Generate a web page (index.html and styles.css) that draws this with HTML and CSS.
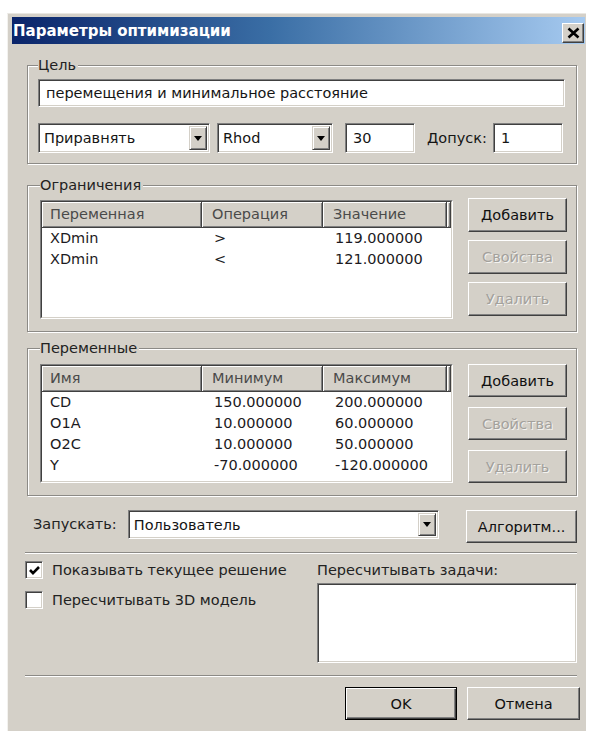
FILE: index.html
```html
<!DOCTYPE html>
<html lang="ru">
<head>
<meta charset="utf-8">
<title>Параметры оптимизации</title>
<link rel="stylesheet" href="styles.css">
</head>
<body>
<div class="window">
  <div class="titlebar">
    <span class="title">Параметры оптимизации</span>
    <span class="close">
      <svg width="13" height="12" viewBox="0 0 13 12"><path d="M1.5 1.5 L11.5 10.5 M11.5 1.5 L1.5 10.5" stroke="#000" stroke-width="2.6" fill="none"/></svg>
    </span>
  </div>

  <div class="content">
    <div class="group group-goal">
      <div class="legend">Цель</div>
      <div class="field field-wide">перемещения и минимальное расстояние</div>
      <div class="goal-row">
        <div class="combo combo-mode">
          <span class="combo-text">Приравнять</span>
          <span class="drop"><i class="arrow"></i></span>
        </div>
        <div class="combo combo-var">
          <span class="combo-text">Rhod</span>
          <span class="drop"><i class="arrow"></i></span>
        </div>
        <div class="field field-num">30</div>
        <span class="tol-label">Допуск:</span>
        <div class="field field-num field-tol">1</div>
      </div>
    </div>

    <div class="group group-limits">
      <div class="legend">Ограничения</div>
      <div class="list-row">
        <div class="listview">
          <div class="lv-inner">
            <div class="lv-head">
              <span class="hd c1">Переменная</span>
              <span class="hd c2">Операция</span>
              <span class="hd c3">Значение</span>
              <span class="hd tail"></span>
            </div>
            <div class="lv-row"><span class="c1">XDmin</span><span class="c2">&gt;</span><span class="c3">119.000000</span></div>
            <div class="lv-row"><span class="c1">XDmin</span><span class="c2">&lt;</span><span class="c3">121.000000</span></div>
          </div>
        </div>
        <div class="btn-col btn-col-limits">
          <div class="btn">Добавить</div>
          <div class="btn disabled">Свойства</div>
          <div class="btn disabled">Удалить</div>
        </div>
      </div>
    </div>

    <div class="group group-vars">
      <div class="legend">Переменные</div>
      <div class="list-row">
        <div class="listview">
          <div class="lv-inner">
            <div class="lv-head">
              <span class="hd c1">Имя</span>
              <span class="hd c2">Минимум</span>
              <span class="hd c3">Максимум</span>
              <span class="hd tail"></span>
            </div>
            <div class="lv-row"><span class="c1">CD</span><span class="c2">150.000000</span><span class="c3">200.000000</span></div>
            <div class="lv-row"><span class="c1">O1A</span><span class="c2">10.000000</span><span class="c3">60.000000</span></div>
            <div class="lv-row"><span class="c1">O2C</span><span class="c2">10.000000</span><span class="c3">50.000000</span></div>
            <div class="lv-row"><span class="c1">Y</span><span class="c2">-70.000000</span><span class="c3">-120.000000</span></div>
          </div>
        </div>
        <div class="btn-col btn-col-vars">
          <div class="btn">Добавить</div>
          <div class="btn disabled">Свойства</div>
          <div class="btn disabled">Удалить</div>
        </div>
      </div>
    </div>

    <div class="run-row">
      <span class="run-label">Запускать:</span>
      <div class="combo combo-run">
        <span class="combo-text">Пользователь</span>
        <span class="drop"><i class="arrow"></i></span>
      </div>
      <div class="btn btn-algo">Алгоритм...</div>
    </div>

    <div class="sep"></div>

    <div class="options">
      <div class="checks">
        <div class="check-line">
          <span class="checkbox">
            <svg width="13" height="13" viewBox="0 0 13 13"><path d="M2 6 L5 9.2 L11 3" stroke="#000" stroke-width="2.6" fill="none"/></svg>
          </span>
          <span>Показывать текущее решение</span>
        </div>
        <div class="check-line">
          <span class="checkbox"></span>
          <span>Пересчитывать 3D модель</span>
        </div>
      </div>
      <div class="tasks">
        <div class="tasks-label">Пересчитывать задачи:</div>
        <div class="field tasks-box"></div>
      </div>
    </div>

    <div class="sep sep-bottom"></div>

    <div class="actions">
      <div class="btn btn-default">OK</div>
      <div class="btn btn-cancel">Отмена</div>
    </div>
  </div>
</div>
</body>
</html>
```

FILE: styles.css
```css
html, body {
  margin: 0;
  background: #ffffff;
}

body {
  font-family: "DejaVu Sans", "Noto Sans", sans-serif;
  font-size: 14.5px;
  color: #151515;
}

/* dialog frame */
.window {
  box-sizing: border-box;
  width: 579px;
  height: 718px;
  margin: 13px 0 0 7px;
  padding: 3px 1px 0 4px;
  background: #d4d0c8;
  border-top: 1px solid #e9e7e2;
  border-left: 1px solid #f3f2ef;
}

.titlebar {
  height: 27px;
  display: flex;
  align-items: center;
  justify-content: space-between;
  background: linear-gradient(90deg, #0a246a 0%, #3a6ea5 45%, #a6caf0 100%);
}

.title {
  color: #fff;
  font-weight: bold;
  font-size: 15px;
  padding-left: 1px;
}

.close {
  box-sizing: border-box;
  width: 22px;
  height: 20px;
  margin: 5px 1px 0 0;
  display: flex;
  align-items: center;
  justify-content: center;
  background: #d4d0c8;
  border: 1px solid;
  border-color: #fff #404040 #404040 #fff;
  box-shadow: inset -1px -1px #808080;
}

.content {
  padding: 0 8px 0 15px;
  display: flex;
  flex-direction: column;
}

/* etched group box */
.group {
  border: 1px solid #8c8a86;
  box-shadow: inset 1px 1px #fff, 1px 1px #fff;
  padding: 0 11px 10px 10px;
}

.legend {
  width: fit-content;
  margin: -10px 0 0 0;
  padding: 0 2px 0 0;
  height: 18px;
  line-height: 18px;
  background: #d4d0c8;
  color: #222;
}

.group-goal {
  margin-top: 21px;
}

/* sunken edit field */
.field {
  box-sizing: border-box;
  background: #fff;
  border: 1px solid;
  border-color: #808080 #fff #fff #808080;
  box-shadow: inset 1px 1px #404040, inset -1px -1px #d4d0c8;
  padding: 0 7px;
  display: flex;
  align-items: center;
}

.field-wide {
  margin-top: 5px;
  height: 28px;
}

.goal-row {
  display: flex;
  align-items: center;
  margin-top: 16px;
}

.combo {
  box-sizing: border-box;
  height: 30px;
  background: #fff;
  border: 1px solid;
  border-color: #808080 #fff #fff #808080;
  box-shadow: inset 1px 1px #404040, inset -1px -1px #d4d0c8;
  padding: 2px;
  display: flex;
  align-items: stretch;
}

.combo-text {
  flex: 1;
  display: flex;
  align-items: center;
  padding-left: 3px;
}

.drop {
  box-sizing: border-box;
  width: 18px;
  display: flex;
  align-items: center;
  justify-content: center;
  background: #d4d0c8;
  border: 1px solid;
  border-color: #d4d0c8 #404040 #404040 #d4d0c8;
  box-shadow: inset 1px 1px #fff, inset -1px -1px #808080;
}

.arrow {
  width: 0;
  height: 0;
  border-left: 4px solid transparent;
  border-right: 4px solid transparent;
  border-top: 5px solid #000;
}

.combo-mode {
  width: 172px;
}

.combo-var {
  width: 116px;
  margin-left: 7px;
}

.field-num {
  width: 70px;
  height: 30px;
  margin-left: 12px;
}

.tol-label {
  margin-left: 12px;
}

.field-tol {
  margin-left: 6px;
}

/* list groups */
.group-limits {
  margin-top: 21px;
  padding: 0 9px 12px 12px;
}

.group-vars {
  margin-top: 16px;
  padding: 0 9px 12px 12px;
}

.list-row {
  display: flex;
  align-items: flex-start;
  margin-top: 6px;
}

.group-vars .list-row {
  margin-top: 7px;
}

.listview {
  box-sizing: border-box;
  width: 413px;
  height: 119px;
  border: 1px solid;
  border-color: #808080 #fff #fff #808080;
}

.lv-inner {
  box-sizing: border-box;
  height: 100%;
  background: #fff;
  border: 1px solid;
  border-color: #404040 #d4d0c8 #d4d0c8 #404040;
}

.lv-head,
.lv-row {
  display: flex;
}

.hd {
  box-sizing: border-box;
  height: 26px;
  line-height: 25px;
  background: #d4d0c8;
  color: #4a4a4a;
  border-right: 1px solid #404040;
  border-bottom: 1px solid #404040;
  box-shadow: inset 1px 1px #fff, inset -1px -1px #808080;
  white-space: nowrap;
}

.c1 { width: 160px; padding-left: 8px; box-sizing: border-box; }
.c2 { width: 121px; padding-left: 10px; box-sizing: border-box; }
.c3 { width: 124px; padding-left: 10px; box-sizing: border-box; }
.tail { width: 4px; }

.lv-row {
  height: 21px;
  line-height: 21px;
  color: #1c1a22;
}

.lv-row .c2,
.lv-row .c3 {
  padding-left: 12px;
}

.btn-col {
  display: flex;
  flex-direction: column;
  margin-left: 15px;
}

.btn {
  box-sizing: border-box;
  width: 99px;
  height: 34px;
  display: flex;
  align-items: center;
  justify-content: center;
  background: #d4d0c8;
  border: 1px solid;
  border-color: #fff #404040 #404040 #fff;
  box-shadow: inset -1px -1px #808080;
  color: #111;
  white-space: nowrap;
}

.btn.disabled {
  color: #a3a19c;
  text-shadow: 1px 1px #f4f3f0;
}

.btn-col-limits {
  margin-top: -2px;
  gap: 8px;
}

.btn-col-vars {
  gap: 10px;
}

.btn-col-vars .btn {
  height: 33px;
}

/* launch row */
.run-row {
  display: flex;
  align-items: flex-start;
  margin-top: 14px;
}

.run-label {
  width: 95px;
  padding-left: 6px;
  line-height: 28px;
  color: #222;
}

.combo-run {
  width: 312px;
  height: 29px;
}

.btn-algo {
  width: 111px;
  height: 33px;
  margin-left: 27px;
}

.sep {
  height: 0;
  margin: 9px 0 0 -2px;
  border-top: 1px solid #8c8a86;
  border-bottom: 1px solid #fff;
}

/* options */
.options {
  display: flex;
  margin-top: 7px;
}

.checks {
  width: 293px;
  margin-left: -2px;
  display: flex;
  flex-direction: column;
  gap: 12px;
}

.check-line {
  display: flex;
  align-items: center;
  gap: 9px;
  height: 18px;
  color: #222;
}

.checkbox {
  box-sizing: border-box;
  width: 18px;
  height: 18px;
  background: #fff;
  border: 1px solid;
  border-color: #808080 #fff #fff #808080;
  box-shadow: inset 1px 1px #404040, inset -1px -1px #d4d0c8;
  display: flex;
  align-items: center;
  justify-content: center;
}

.tasks {
  display: flex;
  flex-direction: column;
}

.tasks-label {
  height: 18px;
  line-height: 18px;
  color: #222;
}

.tasks-box {
  width: 260px;
  height: 80px;
  margin-top: 4px;
}

.sep-bottom {
  margin-top: 12px;
}

.actions {
  display: flex;
  justify-content: flex-end;
  gap: 10px;
  margin: 10px -3px 0 0;
}

.btn-default {
  width: 112px;
  height: 33px;
  border: 1px solid #000;
  box-shadow: inset 1px 1px #fff, inset -1px -1px #404040, inset -2px -2px #808080;
}

.btn-cancel {
  width: 113px;
  height: 33px;
}
```
